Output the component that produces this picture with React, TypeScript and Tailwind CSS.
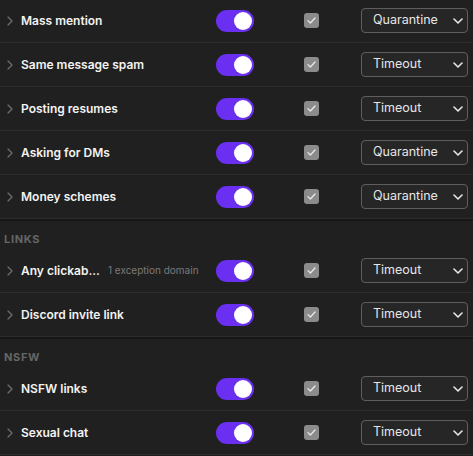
import React from 'react';

type Rule = { name: string; action: 'Quarantine' | 'Timeout'; note?: string };

const sections: { title?: string; rules: Rule[] }[] = [
  {
    rules: [
      { name: 'Mass mention', action: 'Quarantine' },
      { name: 'Same message spam', action: 'Timeout' },
      { name: 'Posting resumes', action: 'Timeout' },
      { name: 'Asking for DMs', action: 'Quarantine' },
      { name: 'Money schemes', action: 'Quarantine' },
    ],
  },
  {
    title: 'Links',
    rules: [
      { name: 'Any clickab...', action: 'Timeout', note: '1 exception domain' },
      { name: 'Discord invite link', action: 'Timeout' },
    ],
  },
  {
    title: 'NSFW',
    rules: [
      { name: 'NSFW links', action: 'Timeout' },
      { name: 'Sexual chat', action: 'Timeout' },
    ],
  },
];

const Toggle = () => (
  <div className="w-[38px] h-[22px] rounded-full bg-[#6a2ff1] flex items-center justify-end pr-[2px] shrink-0">
    <div className="w-[18px] h-[18px] rounded-full bg-white" />
  </div>
);

const Check = () => (
  <div className="w-[15px] h-[15px] rounded-[3px] bg-[#8b8b8b] flex items-center justify-center shrink-0">
    <svg width="9" height="7" viewBox="0 0 9 7" fill="none">
      <path d="M1 3.6 L3.4 6 L8 1" stroke="#e8e8e8" strokeWidth="1.3" strokeLinecap="round" strokeLinejoin="round" />
    </svg>
  </div>
);

const Select = ({ value }: { value: string }) => (
  <div className="w-[107px] h-[25px] rounded-[4px] border border-[#5e5e5e] bg-[#262626] flex items-center justify-between pl-[11px] pr-[4px] shrink-0">
    <span className="text-[12.5px] text-[#e6e6e6]">{value}</span>
    <svg width="10" height="6" viewBox="0 0 10 6" fill="none">
      <path d="M1 1 L5 5 L9 1" stroke="#e6e6e6" strokeWidth="1.6" strokeLinecap="round" strokeLinejoin="round" />
    </svg>
  </div>
);

const RuleRow = ({ rule }: { rule: Rule }) => (
  <div className="flex items-center h-[44px] border-b border-[#2c2c2c]">
    <div className="flex items-center w-[216px] pl-[7px] shrink-0 min-w-0">
      <svg width="6" height="10" viewBox="0 0 6 10" fill="none" className="shrink-0">
        <path d="M1 1 L5 5 L1 9" stroke="#6f6f6f" strokeWidth="1.2" strokeLinecap="round" strokeLinejoin="round" />
      </svg>
      <span className="ml-[8px] text-[12px] font-semibold text-[#f3f3f3] whitespace-nowrap">{rule.name}</span>
      {rule.note && <span className="ml-[8px] text-[10px] text-[#7a7a7a] whitespace-nowrap">{rule.note}</span>}
    </div>
    <Toggle />
    <div className="ml-[50px]">
      <Check />
    </div>
    <div className="ml-[42px]">
      <Select value={rule.action} />
    </div>
  </div>
);

export default function App() {
  return (
    <div className="w-[473px] h-[456px] overflow-hidden bg-[#202020]" style={{ fontFamily: 'Inter, "Noto Sans", sans-serif' }}>
      <div className="-mt-[1px]">
        {sections.map((s, i) => (
          <div key={i} className={i > 0 ? 'border-t-2 border-[#171717]' : ''}>
            {s.title && (
              <div className="h-[28px] pt-[12px] pl-[4px] text-[11px] leading-[13px] font-bold uppercase tracking-[0.06em] text-[#666666]">
                {s.title}
              </div>
            )}
            {s.rules.map((r, j) => (
              <RuleRow key={j} rule={r} />
            ))}
          </div>
        ))}
      </div>
    </div>
  );
}
